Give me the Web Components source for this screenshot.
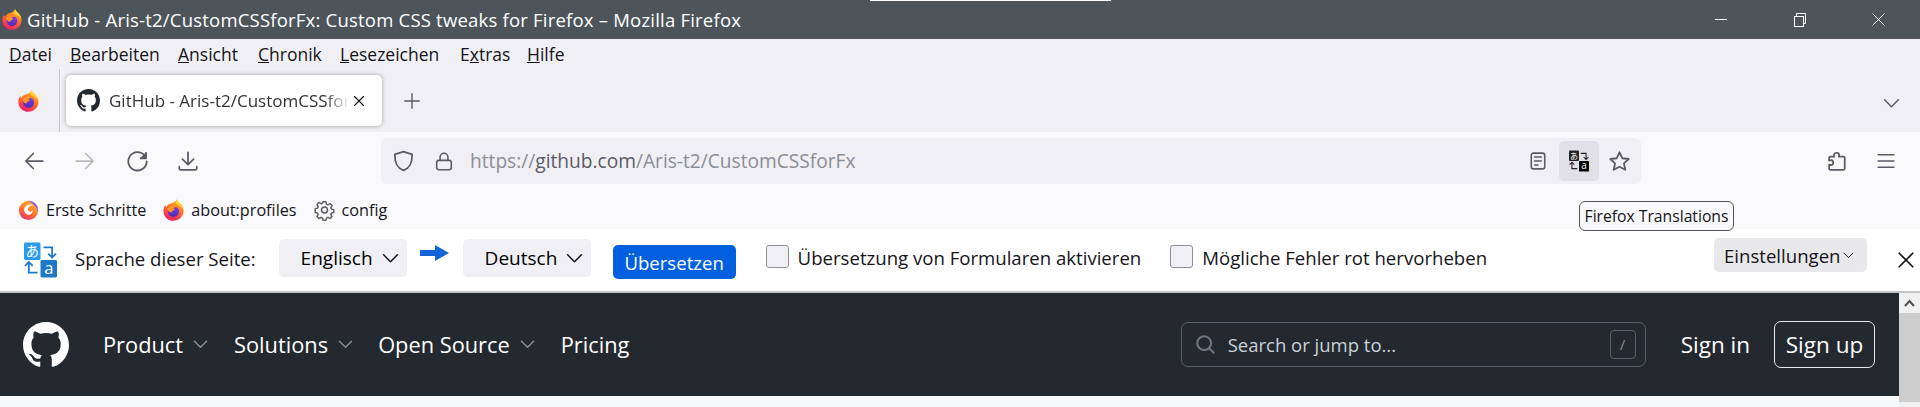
<!DOCTYPE html>
<html lang="de">
<head>
<meta charset="utf-8">
<title>GitHub - Aris-t2/CustomCSSforFx</title>
<style>
html, body { margin: 0; height: 407px; overflow: hidden; background: #fff; }
body { font-family: "Open Sans", "Noto Sans", sans-serif; position: relative; }
</style>
</head>
<body>
<title-bar>GitHub - Aris-t2/CustomCSSforFx: Custom CSS tweaks for Firefox – Mozilla Firefox</title-bar>
<menu-bar>
  <span style="width:61px"><u>D</u>atei</span>
  <span style="width:108px"><u>B</u>earbeiten</span>
  <span style="width:80px"><u>A</u>nsicht</span>
  <span style="width:82px"><u>C</u>hronik</span>
  <span style="width:120px"><u>L</u>esezeichen</span>
  <span style="width:67px">E<u>x</u>tras</span>
  <span><u>H</u>ilfe</span>
</menu-bar>
<tab-strip>GitHub - Aris-t2/CustomCSSforFx: Custom CSS tweaks for Firefox</tab-strip>
<nav-bar></nav-bar>
<bookmarks-bar>
  <bookmark-item icon="start">Erste Schritte</bookmark-item>
  <bookmark-item icon="firefox">about:profiles</bookmark-item>
  <bookmark-item icon="gear">config</bookmark-item>
</bookmarks-bar>
<translate-bar></translate-bar>
<github-view></github-view>
<hover-tip>Firefox Translations</hover-tip>

<script>
const FIREFOX = `<svg viewBox="1 .5 22 23" width="100%" height="100%">
  <defs>
    <linearGradient id="b" x1="0.7" y1="0.1" x2="0.3" y2="1"><stop offset="0" stop-color="#ffb21a"/><stop offset=".45" stop-color="#ff6a2a"/><stop offset="1" stop-color="#f2176e"/></linearGradient>
    <linearGradient id="p" x1="0.5" y1="0" x2="0.5" y2="1"><stop offset="0" stop-color="#8a3fe0"/><stop offset="1" stop-color="#4b2ab5"/></linearGradient>
  </defs>
  <path d="M15.5 .8c.6 2.7 3.2 3.6 4.9 6 1.5 2 2.3 4.2 2.1 6.9-.4 5.6-5 9.6-10.6 9.6C6 23.300 1.400 18.800 1.400 13c0-2.500.8-4.700 2-6.300.2 1 .7 1.700 1.300 2.100.6-1.800 2.300-3.300 4.300-3.700 2.600-.6 5.500-1.500 6.500-4.300z" fill="url(#b)"/>
  <path d="M15.500 .8c.6 2.700 3.200 3.600 4.900 6 1 1.400 1.700 2.900 2 4.600-1.400-2.500-4.500-4-7.200-5.400-.9-.5-1.200-3.100.3-5.200z" fill="#ffd62e"/>
  <circle cx="12" cy="13.500" r="5.800" fill="url(#p)"/>
  <path d="M5.500 11c1.500-3 5-4.300 8-3.300 1.200.4 2 1 2.600 1.800-1.700-.8-3.700-.4-4.600.5 1 .3 1.700 1.100 1.700 2-1.600.3-3 1.200-3.300 2.600C8 14.500 6.300 13.200 5.500 11z" fill="#ff9420"/>
</svg>`;

const TRANS = (a, b, arrow, glyph) => `<svg viewBox="0 0 34 36" width="100%" height="100%">
  <rect x="0" y="0" width="17" height="18" rx="1.500" fill="${a}"/>
  <rect x="17" y="18" width="17" height="18" rx="1.500" fill="${b}"/>
  <text x="8.500" y="14" font-family="'Noto Sans CJK JP',sans-serif" font-size="13.500" fill="${glyph}" text-anchor="middle">あ</text>
  <text x="25.500" y="32" font-family="'Open Sans',sans-serif" font-size="17" fill="${glyph}" text-anchor="middle">a</text>
  <path d="M20 5h9v10M25 11.500l4 4 4-4" fill="none" stroke="${arrow}" stroke-width="1.800"/>
  <path d="M14 31H5V20M1 24l4-4 4 4" fill="none" stroke="${arrow}" stroke-width="1.800"/>
</svg>`;

const stroke = (body, sw = 1.4) => `<svg viewBox="0 0 16 16" width="100%" height="100%" fill="none" stroke="currentColor" stroke-width="${sw}" stroke-linecap="round" stroke-linejoin="round">${body}</svg>`;
const GITHUB_PATH = "M8 0C3.58 0 0 3.58 0 8c0 3.54 2.29 6.53 5.47 7.59.4.07.55-.17.55-.38 0-.19-.01-.82-.01-1.49-2.01.37-2.53-.49-2.69-.94-.09-.23-.48-.94-.82-1.13-.28-.15-.68-.52-.01-.53.63-.01 1.08.58 1.23.82.72 1.21 1.87.87 2.33.66.07-.52.28-.87.51-1.07-1.78-.2-3.64-.89-3.64-3.95 0-.87.31-1.59.82-2.15-.08-.2-.36-1.02.08-2.12 0 0 .67-.21 2.2.82.64-.18 1.32-.27 2-.27.68 0 1.36.09 2 .27 1.53-1.04 2.2-.82 2.2-.82.44 1.1.16 1.92.08 2.12.51.56.82 1.27.82 2.15 0 3.07-1.87 3.75-3.65 3.95.29.25.54.73.54 1.48 0 1.07-.01 1.93-.01 2.2 0 .21.15.46.55.38A8.013 8.013 0 0016 8c0-4.42-3.58-8-8-8z";

const ICONS = {
  firefox: FIREFOX,
  start: `<svg viewBox="0 0 24 24" width="100%" height="100%">
    <defs><linearGradient id="s" x1="0.8" y1="0.1" x2="0.3" y2="1"><stop offset="0" stop-color="#ffb02e"/><stop offset=".5" stop-color="#ff7a2a"/><stop offset="1" stop-color="#f0306e"/></linearGradient></defs>
    <circle cx="12" cy="12.500" r="11" fill="url(#s)"/>
    <path d="M11 1.500c6.500-.5 12 4.500 12 11 0 .8-.1 1.500-.2 2.200-.7-5.500-5.700-11-11.800-13.200z" fill="#8f5bea"/>
    <path d="M17.500 6.500c-5-2.500-10.500.5-10.500 5.500 0 3.300 2.700 5.800 6 5.300 2.600-.4 4.300-2.700 3.700-5-.9 1.600-2.800 2.200-4.200 1.200-1.500-1-1.600-3-.4-4.700.9-1.200 2.800-2.300 5.400-2.300z" fill="#fff"/>
  </svg>`,
  gear: stroke(`<circle cx="8" cy="8" r="2.300"/><path d="M6.800 1h2.400l.4 2 1.300.6 1.800-1.100 1.700 1.700-1.100 1.800.6 1.300 2 .4v2.400l-2 .4-.6 1.300 1.100 1.800-1.700 1.700-1.800-1.100-1.300.6-.4 2H6.800l-.4-2-1.300-.6-1.800 1.100-1.700-1.700 1.100-1.800-.6-1.300-2-.4V6.800l2-.4.6-1.300-1.100-1.800 1.700-1.700 1.800 1.100 1.300-.6z" transform="translate(.8 .8) scale(.9)"/>`, 1.2),
  back: stroke(`<path d="M15 8H1.500M7.500 2 1.500 8l6 6"/>`),
  forward: stroke(`<path d="M1 8h13.500M8.500 2l6 6-6 6"/>`),
  reload: stroke(`<path d="M13.500 3.500A7 7 0 1 0 15 8"/><path d="M14.500 1v4.500H10" fill="currentColor" stroke="none"/><path d="M14.500 1.500v4h-4"/>`),
  download: stroke(`<path d="M8 1v9.500M3.500 6.500 8 11l4.500-4.500M1 12.500V14a1 1 0 0 0 1 1h12a1 1 0 0 0 1-1v-1.500"/>`),
  shield: stroke(`<path d="M8 .9 14.600 3c0 5.500-1 10-6.600 12.200C2.400 13 1.400 8.500 1.400 3z"/>`),
  lock: stroke(`<rect x="1.500" y="7" width="13" height="8.300" rx="2"/><path d="M4.500 7V4.200a3.500 3.500 0 0 1 7 0V7"/>`),
  reader: stroke(`<rect x="2" y="1" width="12" height="14" rx="2"/><path d="M5 4.500h6M5 8h6M5 11.500h3"/>`),
  star: stroke(`<path d="M8 1l2.100 4.500 4.900.6-3.600 3.300 1 4.900L8 12l-4.400 2.300 1-4.900L1 6.100l4.900-.6z"/>`),
  puzzle: stroke(`<path d="M8.500 1.500c1.200 0 2 .8 2 1.800 0 .5-.2.9-.3 1.200h3.800a1 1 0 0 1 1 1V14a1 1 0 0 1-1 1H3.500a1 1 0 0 1-1-1v-3.200c.4.200.8.400 1.300.400 1.100 0 2-.9 2-2s-.9-2-2-2c-.5 0-.9.200-1.300.4V5.500a1 1 0 0 1 1-1h3.200c-.2-.3-.3-.7-.3-1.200 0-1 .9-1.800 2.100-1.800z"/>`),
  menu: stroke(`<path d="M1 2.500h14M1 8h14M1 13.500h14"/>`),
  plus: stroke(`<path d="M8 .8v14.400M.8 8h14.400"/>`),
  close: stroke(`<path d="M2 2l12 12M14 2 2 14"/>`, 1.500),
  chevron: stroke(`<path d="M1.500 4.500 8 11l6.500-6.500"/>`),
  github: `<svg viewBox="0 0 16 16" width="100%" height="100%"><path fill="currentColor" d="${GITHUB_PATH}"/></svg>`,
  search: `<svg viewBox="0 0 16 16" width="100%" height="100%"><path fill="currentColor" d="M10.680 11.740a6 6 0 0 1-7.922-8.982 6 6 0 0 1 8.982 7.922l3.040 3.040a.749.749 0 0 1-.326 1.275.749.749 0 0 1-.734-.215ZM11.500 7a4.499 4.499 0 1 0-8.997 0A4.499 4.499 0 0 0 11.500 7Z"/></svg>`,
  translate: TRANS('#2b9be8', '#1c78c8', '#1c78c8', '#fff'),
  translateBlack: TRANS('#222', '#000', '#222', '#fff'),
};

// small icon box, size comes from w/h attributes
class FxIcon extends HTMLElement {
  connectedCallback() {
    if (this.shadowRoot) return;
    const w = this.getAttribute('w') || 20, h = this.getAttribute('h') || w;
    this.attachShadow({ mode: 'open' }).innerHTML = `<style>
      :host { display: block; flex: none; width: ${w}px; height: ${h}px; color: ${this.getAttribute('color') || '#5b5b66'}; }
      svg { display: block; }
    </style>${ICONS[this.getAttribute('name')] || ''}`;
  }
}
customElements.define('fx-icon', FxIcon);

class TitleBar extends HTMLElement {
  constructor() {
    super();
    this.attachShadow({ mode: 'open' }).innerHTML = `<style>
      :host { display: flex; align-items: center; height: 39px; background: #4d555b; color: #fff; padding-left: 2px; position: relative; font-size: 18.500px; white-space: nowrap; }
      span { margin-left: 5px; letter-spacing: .21px; }
      .controls { margin-left: auto; display: flex; padding-right: 2px; }
      .controls div { width: 79px; height: 39px; display: flex; align-items: center; justify-content: center; }
      .controls svg { display: block; }
      .strip { position: absolute; left: 870px; top: 0; width: 241px; height: 1px; background: #fff; }
    </style>
    <fx-icon name="firefox" w="20" h="21"></fx-icon>
    <span><slot></slot></span>
    <div class="strip"></div>
    <div class="controls">
      <div><svg width="12" height="12" viewBox="0 0 12 12" stroke="#fff" fill="none"><path d="M0 5.500h12"/></svg></div>
      <div><svg width="12" height="14" viewBox="0 0 12 14" stroke="#fff" fill="none"><rect x=".5" y="3.500" width="9" height="10"/><path d="M2.500 3.500v-3h9v10h-2"/></svg></div>
      <div><svg width="13" height="13" viewBox="0 0 13 13" stroke="#fff" fill="none"><path d="M.5.500l12 12M12.500.500l-12 12"/></svg></div>
    </div>`;
  }
}
customElements.define('title-bar', TitleBar);

class MenuBar extends HTMLElement {
  constructor() {
    super();
    this.attachShadow({ mode: 'open' }).innerHTML = `<style>
      :host { display: flex; align-items: center; height: 30px; background: #f0f0f4; color: #15141a; padding-left: 9px; font-size: 17.500px; white-space: nowrap; }
      ::slotted(span) { display: block; }
    </style><slot></slot>`;
  }
}
customElements.define('menu-bar', MenuBar);

class TabStrip extends HTMLElement {
  constructor() {
    super();
    this.attachShadow({ mode: 'open' }).innerHTML = `<style>
      :host { display: flex; align-items: flex-start; height: 63px; background: #f0f0f4; color: #15141a; box-sizing: border-box; }
      .pin { width: 60px; height: 63px; display: flex; align-items: center; padding-left: 18px; box-sizing: border-box; border-right: 1px solid #c8c8cc; }
      .tab { margin: 6px 0 0 6px; width: 316px; height: 51px; box-sizing: border-box; background: #fff; border-radius: 5px; box-shadow: 0 0 4px rgba(0,0,0,.35); display: flex; align-items: center; padding-left: 11px; }
      .label { width: 240px; margin-left: 9px; font-size: 17px; white-space: nowrap; overflow: hidden; color: #33323a;
        -webkit-mask-image: linear-gradient(to right, #000 90%, transparent 100%); mask-image: linear-gradient(to right, #000 90%, transparent 100%); }
      .x { margin-left: 4px; color: #15141a; }
      .plus { margin: 24px 0 0 22px; }
      .all { margin: 26px 20px 0 auto; }
    </style>
    <div class="pin"><fx-icon name="firefox" w="21" h="22"></fx-icon></div>
    <div class="tab">
      <fx-icon name="github" w="23" h="23" color="#24292f"></fx-icon>
      <div class="label"><slot></slot></div>
      <fx-icon class="x" name="close" w="12" h="12"></fx-icon>
    </div>
    <fx-icon class="plus" name="plus" w="16" h="16"></fx-icon>
    <fx-icon class="all" name="chevron" w="17" h="17"></fx-icon>`;
  }
}
customElements.define('tab-strip', TabStrip);

class NavBar extends HTMLElement {
  constructor() {
    super();
    this.attachShadow({ mode: 'open' }).innerHTML = `<style>
      :host { display: flex; align-items: center; height: 58px; background: #f9f9fb; padding-left: 24px; color: #5b5b66; }
      .url { margin-left: 183px; width: 1260px; height: 46px; box-sizing: border-box; background: #f0f0f4; border-radius: 6px; display: flex; align-items: center; padding-left: 12px; }
      .text { margin-left: 17px; font-size: 19.150px; color: #8d8d96; white-space: nowrap; }
      .text b { font-weight: 400; color: #5b5b66; }
      .tr { margin-left: 12px; width: 40px; height: 40px; border-radius: 5px; background: #e0e0e6; display: flex; align-items: center; justify-content: center; }
    </style>
    <fx-icon name="back"></fx-icon>
    <fx-icon name="forward" style="margin-left:31px;opacity:.4"></fx-icon>
    <fx-icon name="reload" style="margin-left:32px" w="21" h="21"></fx-icon>
    <fx-icon name="download" style="margin-left:30px"></fx-icon>
    <div class="url">
      <fx-icon name="shield" w="21" h="22"></fx-icon>
      <fx-icon name="lock" w="18" h="21" style="margin-left:21px"></fx-icon>
      <div class="text">https://<b>github.com</b>/Aris-t2/CustomCSSforFx</div>
      <fx-icon name="reader" w="18" h="20" style="margin-left:auto"></fx-icon>
      <div class="tr"><fx-icon name="translateBlack" w="20" h="22"></fx-icon></div>
      <fx-icon name="star" w="21" h="21" style="margin:0 11px 0 10px"></fx-icon>
    </div>
    <fx-icon name="puzzle" w="20" h="22" style="margin-left:185px"></fx-icon>
    <fx-icon name="menu" w="18" h="18" style="margin-left:31px"></fx-icon>`;
  }
}
customElements.define('nav-bar', NavBar);

class BookmarksBar extends HTMLElement {
  constructor() {
    super();
    this.attachShadow({ mode: 'open' }).innerHTML = `<style>
      :host { display: flex; align-items: center; height: 39px; background: #f9f9fb; padding-left: 18px; gap: 17px; }
    </style><slot></slot>`;
  }
}
customElements.define('bookmarks-bar', BookmarksBar);

class BookmarkItem extends HTMLElement {
  constructor() {
    super();
    this.attachShadow({ mode: 'open' }).innerHTML = `<style>
      :host { display: flex; align-items: center; gap: 7px; font-size: 16.200px; color: #15141a; white-space: nowrap; }
    </style><fx-icon name="${this.getAttribute('icon')}" w="21" h="22"></fx-icon><span><slot></slot></span>`;
  }
}
customElements.define('bookmark-item', BookmarkItem);

class TranslateBar extends HTMLElement {
  constructor() {
    super();
    this.attachShadow({ mode: 'open' }).innerHTML = `<style>
      :host { display: flex; align-items: flex-start; height: 62px; background: #fff; padding-left: 24px; font-size: 18.600px; color: #15141a; white-space: nowrap; }
      .sel { width: 128px; height: 38px; margin-top: 10px; box-sizing: border-box; background: #f0f0f4; border-radius: 5px; display: flex; align-items: center; padding-left: 22px; font-size: 19px; font-weight: 500; color: #000; }
      .sel fx-icon { margin-left: 9px; color: #15141a; }
      .label { margin-top: 17px; line-height: 24px; }
      .go { margin: 16px 0 0 22px; width: 123px; height: 34px; background: #0060df; color: #fff; border-radius: 5px; display: flex; align-items: center; justify-content: center; }
      .check { width: 23px; height: 23px; box-sizing: border-box; margin: 16px 9px 0 0; background: #f0f0f4; border: 1px solid #8f8f9d; border-radius: 3px; }
      .opt { margin-left: auto; width: 153px; height: 34px; margin-top: 9px; box-sizing: border-box; background: #e8e8ea; border-radius: 5px; display: flex; align-items: center; padding-left: 10px; }
      .opt fx-icon { margin-left: 2px; color: #15141a; }
    </style>
    <fx-icon name="translate" w="33" h="36" style="margin-top:13px"></fx-icon>
    <div class="label" style="margin-left:18px;margin-right:23px;margin-top:18px">Sprache dieser Seite:</div>
    <div class="sel">Englisch<fx-icon name="chevron" w="17" h="17"></fx-icon></div>
    <svg width="29" height="16" viewBox="0 0 29 16" style="margin:16px 14px 0 13px;flex:none"><path d="M0 5h15V0l14 8-14 8v-5H0z" fill="#1464d8"/></svg>
    <div class="sel">Deutsch<fx-icon name="chevron" w="17" h="17"></fx-icon></div>
    <div class="go">Übersetzen</div>
    <div class="check" style="margin-left:30px"></div>
    <div class="label">Übersetzung von Formularen aktivieren</div>
    <div class="check" style="margin-left:29px"></div>
    <div class="label">Mögliche Fehler rot hervorheben</div>
    <div class="opt">Einstellungen<fx-icon name="chevron" w="11" h="11"></fx-icon></div>
    <fx-icon name="close" w="18" h="18" style="margin:22px 5px 0 30px;color:#15141a"></fx-icon>`;
  }
}
customElements.define('translate-bar', TranslateBar);

class GithubView extends HTMLElement {
  constructor() {
    super();
    this.attachShadow({ mode: 'open' }).innerHTML = `<style>
      :host { display: flex; height: 116px; border-top: 2px solid #c4c4c4; background: #f6f8fa; overflow: hidden; }
      .page { flex: 1; }
      header { display: flex; align-items: center; height: 103px; box-sizing: border-box; background: #24292f; color: #fff; padding: 0 24px 0 23px; font-size: 21.800px; white-space: nowrap; }
      .item { display: flex; align-items: center; }
      .item fx-icon { margin-left: 10px; }
      .search { margin-left: auto; width: 465px; height: 45px; box-sizing: border-box; border: 1px solid #57606a; border-radius: 7px; display: flex; align-items: center; padding: 0 9px 0 13px; color: #c9d1d9; font-size: 18.500px; }
      .search span { margin-left: 12px; }
      kbd { margin-left: auto; width: 26px; height: 29px; box-sizing: border-box; border: 1px solid #57606a; border-radius: 4px; display: flex; align-items: center; justify-content: center; font: 14px "Open Sans", sans-serif; color: #8b949e; }
      .in { margin-left: 35px; font-size: 22.500px; }
      .up { margin-left: 24px; width: 101px; height: 47px; box-sizing: border-box; border: 1px solid #e6e8ea; border-radius: 7px; display: flex; align-items: center; justify-content: center; font-size: 22.500px; }
      .bar { width: 21px; background: #f0f0f0; display: flex; flex-direction: column; }
      .btn { height: 20px; display: flex; align-items: center; justify-content: center; color: #505050; }
      .thumb { height: 89px; background: #cdcdcd; }
    </style>
    <div class="page"><header>
      <fx-icon name="github" w="46" h="46" color="#fff"></fx-icon>
      <div class="item" style="margin-left:34px">Product<fx-icon name="chevron" w="15" h="15" color="#8b949e"></fx-icon></div>
      <div class="item" style="margin-left:26px">Solutions<fx-icon name="chevron" w="15" h="15" color="#8b949e"></fx-icon></div>
      <div class="item" style="margin-left:25px">Open Source<fx-icon name="chevron" w="15" h="15" color="#8b949e"></fx-icon></div>
      <div class="item" style="margin-left:26px">Pricing</div>
      <div class="search"><fx-icon name="search" w="21" h="21" color="#6e7681"></fx-icon><span>Search or jump to...</span><kbd>/</kbd></div>
      <div class="in">Sign in</div>
      <div class="up">Sign up</div>
    </header></div>
    <div class="bar">
      <div class="btn"><svg width="11" height="8" viewBox="0 0 11 8" fill="none" stroke="currentColor" stroke-width="2"><path d="M1 7l4.500-5L10 7"/></svg></div>
      <div class="thumb"></div>
    </div>`;
  }
}
customElements.define('github-view', GithubView);

class HoverTip extends HTMLElement {
  constructor() {
    super();
    this.attachShadow({ mode: 'open' }).innerHTML = `<style>
      :host { position: absolute; left: 1579px; top: 201px; width: 155px; height: 30px; box-sizing: border-box; background: #f9f9fb; border: 1px solid #555; border-radius: 6px; display: flex; align-items: center; justify-content: center; font-size: 15.700px; color: #15141a; white-space: nowrap; }
    </style><slot></slot>`;
  }
}
customElements.define('hover-tip', HoverTip);
</script>
</body>
</html>
